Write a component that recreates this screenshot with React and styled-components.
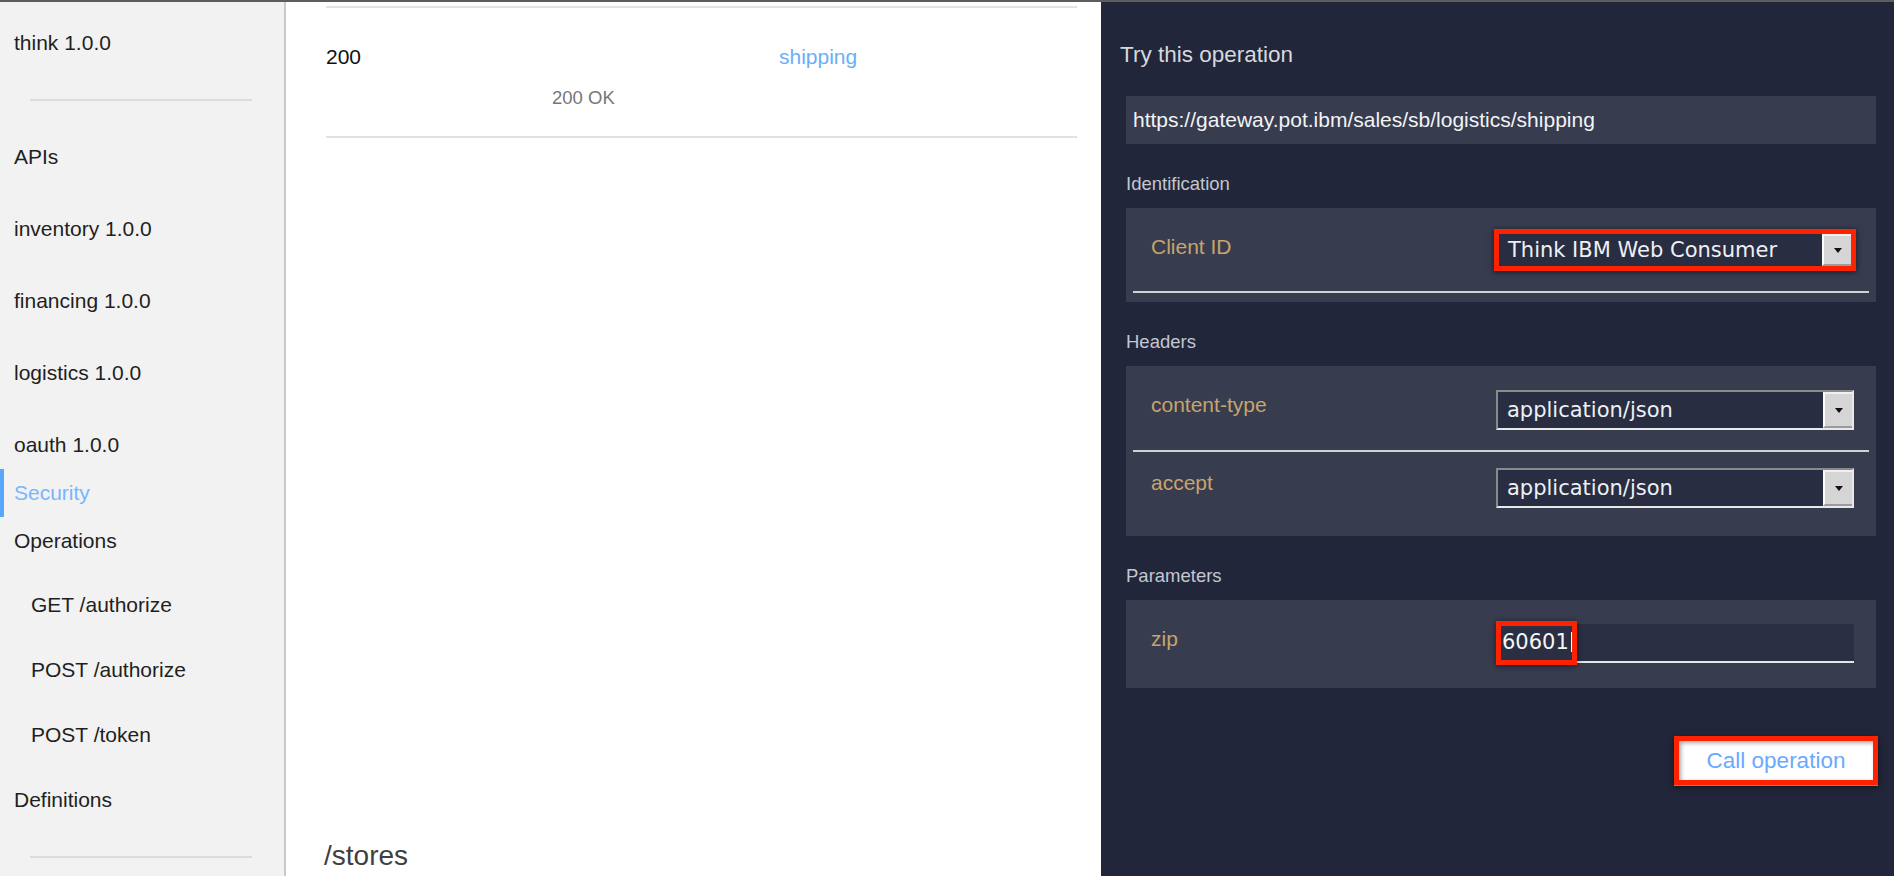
import React from 'react';
import styled, { createGlobalStyle, css } from 'styled-components';

const GlobalStyle = createGlobalStyle`
  html, body {
    margin: 0;
    padding: 0;
    height: 100%;
    overflow: hidden;
  }
  body {
    font-family: "Liberation Sans", Arial, sans-serif;
    background: #ffffff;
  }
`;

const Page = styled.div`
  display: flex;
  height: 876px;
  box-sizing: border-box;
  border-top: 2px solid #5d5d5d;
`;

/* ---------- sidebar ---------- */

const Sidebar = styled.nav`
  width: 284px;
  flex-shrink: 0;
  background: #f2f2f2;
  border-right: 2px solid #c9c9c9;
  padding-top: 17px;
  font-size: 21px;
  color: #1f1f1f;
`;

const NavItem = styled.div`
  height: 48px;
  line-height: 48px;
  margin-top: ${(props) => props.$space || 0}px;
  padding-left: ${(props) => (props.$indent ? 31 : 14)}px;
  white-space: nowrap;
  color: ${(props) => (props.$active ? '#78b6ff' : 'inherit')};
  ${(props) =>
    props.$active &&
    css`
      box-shadow: inset 4px 0 0 #58a7ff;
    `}
`;

const NavRule = styled.div`
  width: 222px;
  height: 2px;
  margin: 32px 0 0 30px;
  background: #dcdcdc;
`;

/* ---------- main column ---------- */

const Main = styled.main`
  flex: 1;
  min-width: 0;
  display: flex;
  flex-direction: column;
  padding: 4px 24px 4px 40px;
  background: #ffffff;
`;

const Rule = styled.div`
  height: 2px;
  margin-top: ${(props) => props.$space || 0}px;
  background: #e2e2e2;
`;

const ResponseGrid = styled.div`
  display: grid;
  grid-template-columns: 226px 227px 1fr;
  row-gap: 11px;
  margin-top: 34px;
`;

const Cell = styled.div`
  line-height: 30px;
  font-size: ${(props) => (props.$small ? 18.5 : 21)}px;
  color: ${(props) => props.$color || '#111111'};
  white-space: nowrap;
`;

const PathHeading = styled.h2`
  margin: auto 0 0 -2px;
  font-size: 28px;
  line-height: 32px;
  font-weight: normal;
  color: #3f3f3f;
`;

/* ---------- try panel ---------- */

const TryPanel = styled.aside`
  width: 793px;
  flex-shrink: 0;
  box-sizing: border-box;
  display: flex;
  flex-direction: column;
  padding: 38px 18px 0 25px;
  background: #21263a;
`;

const PanelTitle = styled.h3`
  margin: 0 0 0 -6px;
  font-size: 22.5px;
  line-height: 30px;
  font-weight: normal;
  color: #d7d8dc;
`;

const UrlBox = styled.div`
  margin-top: 26px;
  height: 48px;
  line-height: 48px;
  padding-left: 7px;
  background: #373c4f;
  font-size: 21px;
  color: #f2f3f5;
  white-space: nowrap;
`;

const SectionLabel = styled.div`
  margin: 28px 0 12px;
  font-size: 18.5px;
  line-height: 24px;
  color: #c4c7cf;
`;

const Card = styled.div`
  background: #373c4f;
  padding-bottom: ${(props) => props.$pb || 0}px;
`;

const Row = styled.div`
  display: flex;
  justify-content: space-between;
  align-items: flex-start;
  padding: ${(props) => props.$pt}px 22px ${(props) => props.$pb}px 25px;
`;

const FieldLabel = styled.div`
  line-height: 30px;
  font-size: 21px;
  color: #c8a46c;
`;

const Divider = styled.div`
  height: 2px;
  margin: 0 7px;
  background: #d2d2d2;
`;

const Select = styled.div`
  display: flex;
  box-sizing: border-box;
  width: 358px;
  height: 40px;
  background: #282d42;
  border: 2px solid;
  border-color: #8a8a8a #e8e8e8 #e8e8e8 #8a8a8a;
  font-family: "DejaVu Sans", sans-serif;
  font-size: 21px;
  color: #eef0f4;

  ${(props) =>
    props.$marked &&
    css`
      width: 362px;
      height: 42px;
      margin: -3px -2px 0 0;
      border: 5px solid #ff2200;
      box-shadow: 0 1px 6px rgba(0, 0, 0, 0.6);
    `}
`;

const SelectValue = styled.div`
  flex: 1;
  display: flex;
  align-items: center;
  padding-left: 9px;
  white-space: nowrap;
`;

const ArrowButton = styled.div`
  width: 29px;
  box-sizing: border-box;
  display: flex;
  align-items: center;
  justify-content: center;
  background: #d5d5d5;
  border-left: 2px solid #fbfbfb;
  border-top: 2px solid #f0f0f0;
  border-bottom: 2px solid #9c9c9c;

  &::after {
    content: '';
    width: 0;
    height: 0;
    border-left: 4px solid transparent;
    border-right: 4px solid transparent;
    border-top: 5px solid #111111;
  }
`;

const ZipField = styled.div`
  position: relative;
  width: 358px;
  height: 39px;
  box-sizing: border-box;
  padding-left: 6px;
  background: #2a2f43;
  border-bottom: 2px solid #e6e6e6;
  font-family: "DejaVu Sans", sans-serif;
  font-size: 21px;
  line-height: 37px;
  color: #f6f6f6;
`;

const Caret = styled.span`
  display: inline-block;
  width: 1px;
  height: 20px;
  margin-left: 2px;
  vertical-align: -3px;
  background: #ffffff;
`;

const Mark = styled.span`
  position: absolute;
  left: 0;
  top: -3px;
  width: 81px;
  height: 44px;
  box-sizing: border-box;
  border: 5px solid #ff2200;
  box-shadow: 0 1px 6px rgba(0, 0, 0, 0.55);
  pointer-events: none;
`;

const ActionRow = styled.div`
  display: flex;
  justify-content: flex-end;
  margin: 48px -2px 0 0;
`;

const CallButton = styled.button`
  width: 204px;
  height: 49px;
  box-sizing: border-box;
  padding: 0;
  border: 5px solid #ff2200;
  background: #ffffff;
  box-shadow: inset 2px 2px 4px rgba(0, 0, 0, 0.35), 0 1px 0 #4a8fd8,
    0 2px 6px rgba(0, 0, 0, 0.5);
  font-family: "Liberation Sans", Arial, sans-serif;
  font-size: 22.5px;
  color: #6aa9ff;
  cursor: pointer;
`;

const SelectField = ({ value, marked }) => (
  <Select $marked={marked}>
    <SelectValue>{value}</SelectValue>
    <ArrowButton />
  </Select>
);

const navItems = [
  { label: 'APIs', space: 32 },
  { label: 'inventory 1.0.0', space: 24 },
  { label: 'financing 1.0.0', space: 24 },
  { label: 'logistics 1.0.0', space: 24 },
  { label: 'oauth 1.0.0', space: 24 },
  { label: 'Security', active: true },
  { label: 'Operations' },
  { label: 'GET /authorize', indent: true, space: 16 },
  { label: 'POST /authorize', indent: true, space: 17 },
  { label: 'POST /token', indent: true, space: 17 },
  { label: 'Definitions', space: 17 },
];

export default function App() {
  return (
    <>
      <GlobalStyle />
      <Page>
        <Sidebar>
          <NavItem>think 1.0.0</NavItem>
          <NavRule />
          {navItems.map((item) => (
            <NavItem
              key={item.label}
              $space={item.space}
              $indent={item.indent}
              $active={item.active}
            >
              {item.label}
            </NavItem>
          ))}
          <NavRule />
        </Sidebar>

        <Main>
          <Rule />
          <ResponseGrid>
            <Cell>200</Cell>
            <Cell />
            <Cell $color="#6ab0f7">shipping</Cell>
            <Cell />
            <Cell $small $color="#777777">200 OK</Cell>
            <Cell />
          </ResponseGrid>
          <Rule $space={23} />
          <PathHeading>/stores</PathHeading>
        </Main>

        <TryPanel>
          <PanelTitle>Try this operation</PanelTitle>
          <UrlBox>https://gateway.pot.ibm/sales/sb/logistics/shipping</UrlBox>

          <SectionLabel>Identification</SectionLabel>
          <Card $pb={9}>
            <Row $pt={24} $pb={20}>
              <FieldLabel>Client ID</FieldLabel>
              <SelectField value="Think IBM Web Consumer" marked />
            </Row>
            <Divider />
          </Card>

          <SectionLabel>Headers</SectionLabel>
          <Card>
            <Row $pt={24} $pb={20}>
              <FieldLabel>content-type</FieldLabel>
              <SelectField value="application/json" />
            </Row>
            <Divider />
            <Row $pt={16} $pb={28}>
              <FieldLabel>accept</FieldLabel>
              <SelectField value="application/json" />
            </Row>
          </Card>

          <SectionLabel>Parameters</SectionLabel>
          <Card>
            <Row $pt={24} $pb={25}>
              <FieldLabel>zip</FieldLabel>
              <ZipField>
                60601
                <Caret />
                <Mark />
              </ZipField>
            </Row>
          </Card>

          <ActionRow>
            <CallButton>Call operation</CallButton>
          </ActionRow>
        </TryPanel>
      </Page>
    </>
  );
}
